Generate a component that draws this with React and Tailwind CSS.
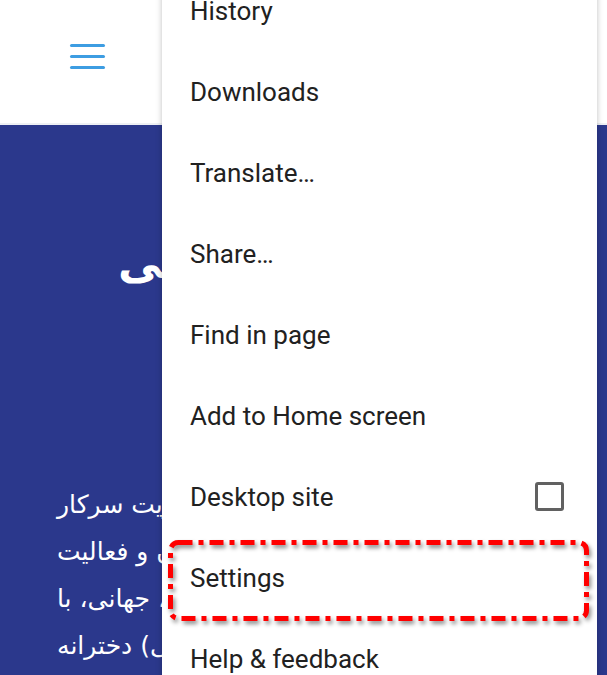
const menuItems = [
  'History',
  'Downloads',
  'Translate…',
  'Share…',
  'Find in page',
  'Add to Home screen',
  'Desktop site',
  'Settings',
  'Help & feedback',
];

const lines = [
  'شرکت مدیریت سرکار',
  'توانمندسازی زنان و فعالیت',
  'در سطح ملی، جهانی، با',
  'مراکز (علمی) دخترانه',
];

const App = () => {
  return (
    <div className="relative w-[607px] h-[675px] overflow-hidden bg-[#2b388c] font-['Roboto',sans-serif]">
      {/* top bar */}
      <div className="h-[125px] bg-white border-b-2 border-[#eef0f4] pt-[44px] pl-[70px]">
        <div className="flex flex-col gap-[8px]">
          <span className="block w-[35px] h-[3px] rounded-full bg-[#3d9de2]" />
          <span className="block w-[35px] h-[3px] rounded-full bg-[#3d9de2]" />
          <span className="block w-[35px] h-[3px] rounded-full bg-[#3d9de2]" />
        </div>
      </div>

      {/* page content behind the menu */}
      <div className="font-['DejaVu_Sans',sans-serif] text-white">
        <div className="pl-[118px] pt-[108px] whitespace-nowrap text-[44px] font-bold leading-[60px]">
          <span dir="rtl">آموزش جهانی</span>
        </div>
        <div className="pl-[57px] pt-[188px] text-[25px] leading-[47px] whitespace-nowrap">
          {lines.map((l) => (
            <div key={l}>
              <span dir="rtl">{l}</span>
            </div>
          ))}
        </div>
      </div>

      {/* overflow menu */}
      <div className="absolute left-[162px] top-[-29px] w-[435px] h-[760px] bg-white shadow-[0_0_6px_rgba(0,0,0,0.25)]">
        {menuItems.map((item) => (
          <div key={item} className="h-[81px] flex items-center justify-between pl-[28px] pr-[33px] text-[26px] text-[#212121]">
            <span>{item}</span>
            {item === 'Desktop site' && (
              <span className="block w-[29px] h-[29px] border-[3px] border-[#616161] rounded-[3px] mt-[-3px]" />
            )}
          </div>
        ))}

        {/* annotation box around Settings */}
        <svg
          className="absolute left-[4px] top-[568px] drop-shadow-[2px_3px_2px_rgba(0,0,0,0.45)]"
          width="424"
          height="84"
          viewBox="0 0 424 84"
        >
          <rect
            x="4.5"
            y="3.5"
            width="416"
            height="76"
            rx="8"
            fill="none"
            stroke="#ff0000"
            strokeWidth="5"
            strokeDasharray="14 6 5 6"
          />
        </svg>
      </div>
    </div>
  );
};

export default App;
